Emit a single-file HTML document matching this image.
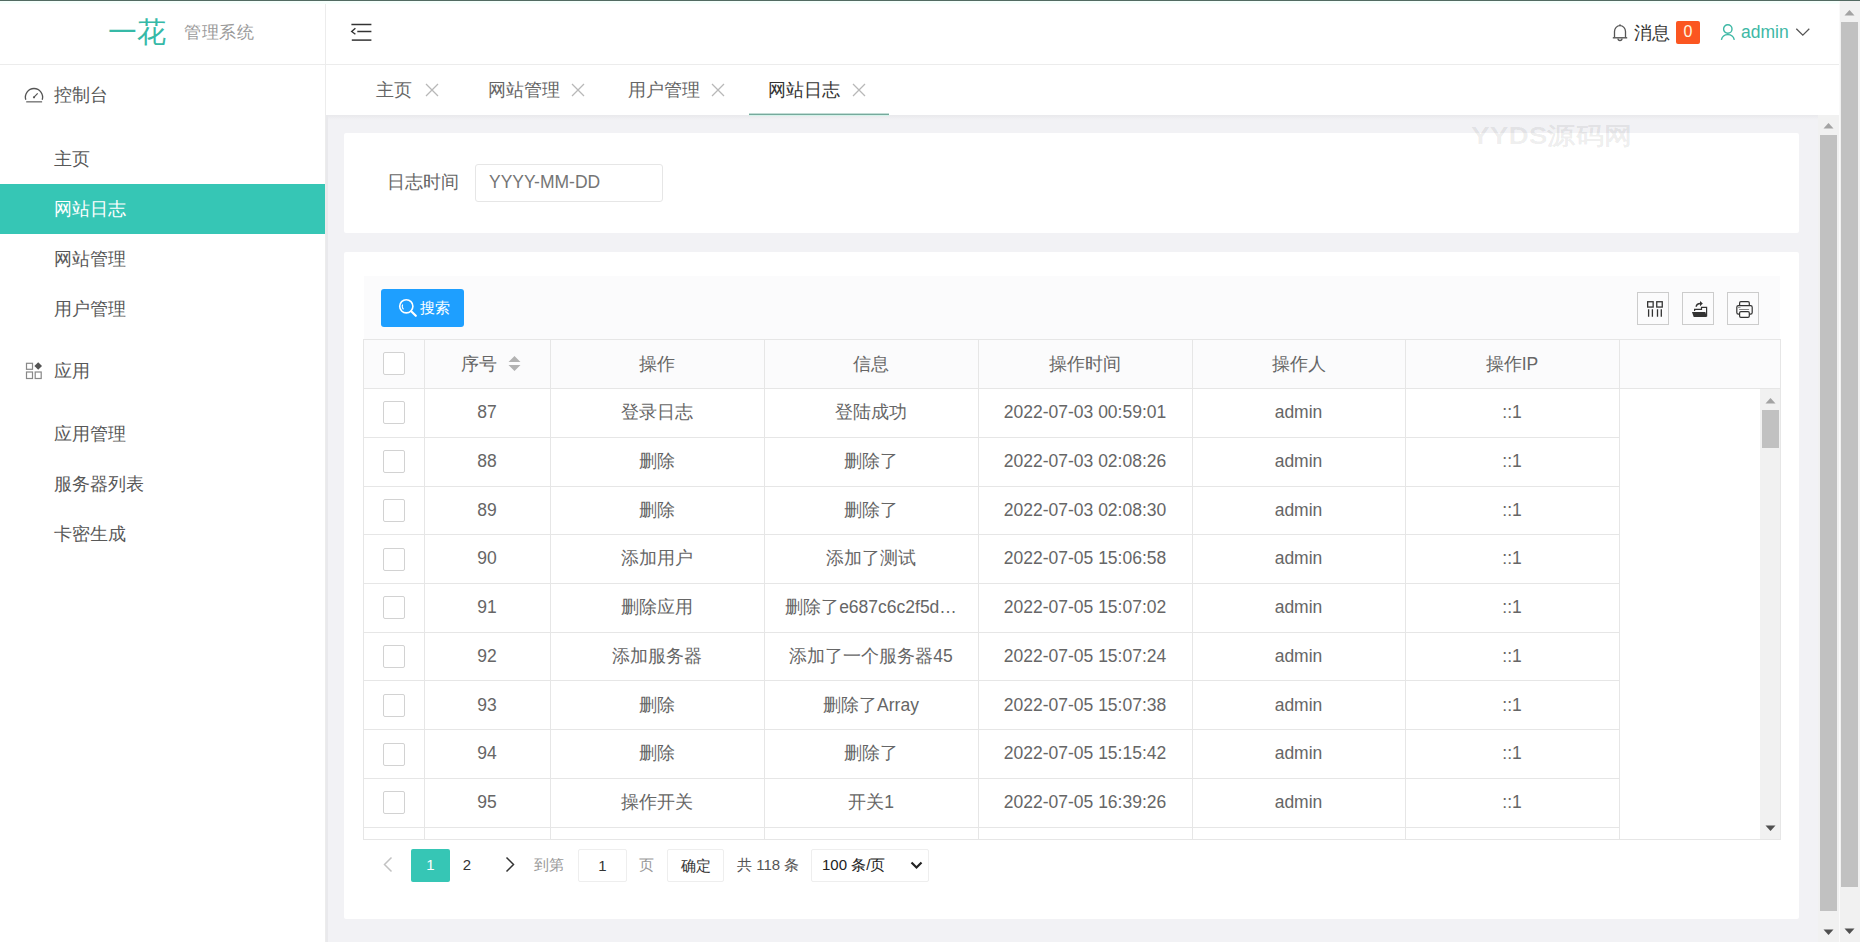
<!DOCTYPE html>
<html><head><meta charset="utf-8">
<style>
*{margin:0;padding:0;box-sizing:border-box}
html,body{width:1860px;height:942px;overflow:hidden;background:#fff;font-family:"Liberation Sans",sans-serif;}
.a{position:absolute;white-space:nowrap}
.t{position:absolute;white-space:nowrap;line-height:20px;font-size:17.5px}
#topline{left:0;top:0;width:1860px;height:1px;background:#536a62}
#side{left:0;top:0;width:326px;height:942px;background:#fff;border-right:1px solid #ececec}
.menu{color:#585858}
#active{left:0;top:184px;width:325px;height:50px;background:#36c6b5}
#content{left:326px;top:115px;width:1492px;height:827px;background:#f2f2f5}
.card{position:absolute;background:#fff;border-radius:2px}
.sb{position:absolute;background:#f1f1f1}
.thumb{position:absolute;background:#c1c1c1}
.hl{position:absolute;height:1px;background:#e6e6e6}
.vl{position:absolute;width:1px;background:#e6e6e6}
.cb{position:absolute;width:22px;height:23px;border:1px solid #d2d2d2;border-radius:2px;background:#fff}
.cell{position:absolute;line-height:20px;font-size:17.5px;color:#666;text-align:center;white-space:nowrap}
</style></head><body>

<!-- SIDEBAR -->
<div class="a" id="side"></div>
<div class="a" style="left:0;top:64px;width:325px;height:1px;background:#ececec"></div>
<div class="t" style="left:108px;top:12px;font-size:29px;line-height:40px;color:#36b9a7">一花</div>
<div class="t" style="left:184px;top:23px;font-size:17px;letter-spacing:0.6px;color:#9a9a9a">管理系统</div>

<svg class="a" style="left:20px;top:82px" width="28" height="26" viewBox="0 0 28 26">
 <path d="M5.8 17.7 A8.6 8.6 0 1 1 22.2 17.7" fill="none" stroke="#555" stroke-width="1.3"/>
 <line x1="6.2" y1="19.8" x2="22.1" y2="19.8" stroke="#808080" stroke-width="1.5"/>
 <line x1="14" y1="15.2" x2="17.7" y2="11.3" stroke="#555" stroke-width="1.2"/>
 <circle cx="14" cy="15.3" r="1.1" fill="#555"/>
</svg>
<div class="t menu" style="left:54px;top:85px">控制台</div>
<div class="t menu" style="left:54px;top:149px">主页</div>
<div class="a" id="active"></div>
<div class="t" style="left:54px;top:199px;color:#fff">网站日志</div>
<div class="t menu" style="left:54px;top:249px">网站管理</div>
<div class="t menu" style="left:54px;top:299px">用户管理</div>
<svg class="a" style="left:25px;top:361px" width="18" height="19" viewBox="0 0 18 19">
 <rect x="1.5" y="2.3" width="6" height="6" fill="none" stroke="#888" stroke-width="1.2"/>
 <rect x="1.5" y="11" width="6" height="6.5" fill="none" stroke="#888" stroke-width="1.2"/>
 <rect x="10.2" y="11" width="6" height="6.5" fill="none" stroke="#888" stroke-width="1.2"/>
 <path d="M13.2 1.2 L17 5 L13.2 8.8 L9.4 5 Z" fill="#555"/>
</svg>
<div class="t menu" style="left:54px;top:361px">应用</div>
<div class="t menu" style="left:54px;top:424px">应用管理</div>
<div class="t menu" style="left:54px;top:474px">服务器列表</div>
<div class="t menu" style="left:54px;top:524px">卡密生成</div>

<!-- HEADER -->
<div class="a" style="left:326px;top:64px;width:1513px;height:1px;background:#ececec"></div>
<svg class="a" style="left:349px;top:21px" width="26" height="22" viewBox="0 0 26 22">
 <line x1="2.4" y1="3.5" x2="22.4" y2="3.5" stroke="#333" stroke-width="1.5"/>
 <line x1="8.3" y1="10.5" x2="22.4" y2="10.5" stroke="#333" stroke-width="1.5"/>
 <line x1="2.8" y1="19.1" x2="22.4" y2="19.1" stroke="#333" stroke-width="1.5"/>
 <polyline points="6.4,7.2 2.7,10.5 6.4,13.3" fill="none" stroke="#333" stroke-width="1.4"/>
</svg>

<svg class="a" style="left:1611px;top:23px" width="18" height="19" viewBox="0 0 18 19">
 <path d="M3.5 14.5 V8.5 A5.5 5.8 0 0 1 14.5 8.5 V14.5" fill="none" stroke="#555" stroke-width="1.3"/>
 <line x1="1.8" y1="14.8" x2="16.2" y2="14.8" stroke="#555" stroke-width="1.4"/>
 <path d="M7 15.5 A2 2 0 0 0 11 15.5" fill="none" stroke="#555" stroke-width="1.3"/>
 <line x1="9" y1="1.2" x2="9" y2="2.8" stroke="#555" stroke-width="1.2"/>
</svg>
<div class="t" style="left:1634px;top:23px;color:#333">消息</div>
<div class="a" style="left:1676px;top:21px;width:24px;height:23px;background:#fb5621;border-radius:2px;color:#fff8e0;font-size:16px;line-height:22px;text-align:center">0</div>
<svg class="a" style="left:1719px;top:23px" width="18" height="18" viewBox="0 0 18 18">
 <circle cx="8.8" cy="6" r="4.2" fill="none" stroke="#3db8a5" stroke-width="1.4"/>
 <path d="M2.4 16.8 A6.6 6.6 0 0 1 15.3 16.8" fill="none" stroke="#3db8a5" stroke-width="1.4"/>
</svg>
<div class="t" style="left:1741px;top:22px;color:#3db8a5">admin</div>
<svg class="a" style="left:1795px;top:27px" width="16" height="10" viewBox="0 0 16 10">
 <polyline points="1.3,1.8 7.8,8.2 14.3,1.8" fill="none" stroke="#555" stroke-width="1.3"/>
</svg>

<!-- TABS -->
<div class="t" style="left:376px;top:80px;color:#666">主页</div>
<div class="t" style="left:488px;top:80px;color:#666">网站管理</div>
<div class="t" style="left:628px;top:80px;color:#666">用户管理</div>
<div class="t" style="left:768px;top:80px;color:#333">网站日志</div>
<svg class="a" style="left:425px;top:83px" width="15" height="14"><path d="M1 1 L13 13 M13 1 L1 13" stroke="#b8b8b8" stroke-width="1.3"/></svg>
<svg class="a" style="left:571px;top:83px" width="15" height="14"><path d="M1 1 L13 13 M13 1 L1 13" stroke="#b8b8b8" stroke-width="1.3"/></svg>
<svg class="a" style="left:711px;top:83px" width="15" height="14"><path d="M1 1 L13 13 M13 1 L1 13" stroke="#b8b8b8" stroke-width="1.3"/></svg>
<svg class="a" style="left:852px;top:83px" width="15" height="14"><path d="M1 1 L13 13 M13 1 L1 13" stroke="#b8b8b8" stroke-width="1.3"/></svg>


<!-- CONTENT -->
<div class="a" id="content"></div>
<div class="a" style="left:326px;top:115px;width:1492px;height:5px;background:linear-gradient(#e9e9ec,#f2f2f5)"></div>
<div class="a" style="left:326px;top:115px;width:2px;height:827px;background:#e9e9ec"></div>

<div class="a" style="left:749px;top:113px;width:140px;height:1px;background:#c2dcd5"></div><div class="a" style="left:749px;top:114px;width:140px;height:1px;background:#76a99c"></div>
<div class="a" style="left:749px;top:115px;width:140px;height:1px;background:#d4f3ea"></div>
<div class="card" style="left:344px;top:133px;width:1455px;height:100px"></div>
<div class="t" style="left:387px;top:172px;color:#666">日志时间</div>
<div class="a" style="left:475px;top:164px;width:188px;height:38px;border:1px solid #e6e6e6;border-radius:3px;background:#fff"></div>
<div class="t" style="left:489px;top:172px;color:#757575">YYYY-MM-DD</div>

<div class="a" style="left:1471px;top:122px;font-size:24px;line-height:28px;font-weight:bold;color:rgba(0,0,0,0.075);transform:scaleX(1.17);transform-origin:0 0">YYDS源码网</div>

<div class="card" style="left:344px;top:252px;width:1455px;height:667px"></div>
<div class="a" style="left:364px;top:276px;width:1416px;height:63px;background:#fbfbfc"></div>
<div class="a" style="left:381px;top:289px;width:83px;height:38px;background:#1e9fff;border-radius:3px"></div>
<svg class="a" style="left:398px;top:298px" width="20" height="20" viewBox="0 0 20 20">
 <circle cx="8.3" cy="8.3" r="6.6" fill="none" stroke="#fff" stroke-width="1.6"/>
 <path d="M4.6 6.5 A4.5 4.5 0 0 0 5.5 11.3" fill="none" stroke="#fff" stroke-width="1.1"/>
 <line x1="13.2" y1="13.2" x2="17.8" y2="17.8" stroke="#fff" stroke-width="2.2" stroke-linecap="round"/>
</svg>
<div class="a" style="left:420px;top:298px;font-size:15px;line-height:20px;color:#fff">搜索</div>

<div class="a" style="left:1637px;top:292px;width:32px;height:33px;border:1px solid #ccc"></div>
<div class="a" style="left:1682px;top:292px;width:32px;height:33px;border:1px solid #ccc"></div>
<div class="a" style="left:1727px;top:292px;width:32px;height:33px;border:1px solid #ccc"></div>
<svg class="a" style="left:1640px;top:296px" width="26" height="26" viewBox="0 0 26 26">
 <rect x="7.65" y="5.75" width="5.5" height="5.3" fill="none" stroke="#333" stroke-width="1.3"/>
 <rect x="16.75" y="5.75" width="5.5" height="5.3" fill="none" stroke="#333" stroke-width="1.3"/>
 <path d="M8.6 13.2V20.8 M12.4 13.2V20.8 M17.5 13.2V20.8 M21.3 13.2V20.8" stroke="#333" stroke-width="1.3"/>
</svg>
<svg class="a" style="left:1686px;top:296px" width="26" height="26" viewBox="0 0 26 26">
 <path d="M10.2 10.8 C10.4 8.3 12.2 7.4 14.6 7.4" fill="none" stroke="#333" stroke-width="1.5"/>
 <path d="M14 4.9 L16.8 7.6 L14 10.3 Z" fill="#333"/>
 <path d="M8.6 15 V13.4 H15.5 V11.3 H20.6 V20.5" fill="none" stroke="#333" stroke-width="1.2"/>
 <path d="M6 15.9 H19.4 L20.7 21 H7.7 Z" fill="#333"/>
</svg>
<svg class="a" style="left:1730px;top:296px" width="26" height="26" viewBox="0 0 26 26">
 <path d="M9.6 9.3 V6.9 Q9.6 5.6 10.9 5.6 H18 Q19.3 5.6 19.3 6.9 V9.3" fill="none" stroke="#333" stroke-width="1.2"/>
 <rect x="6.8" y="9.6" width="15.4" height="8.6" rx="1.6" fill="none" stroke="#333" stroke-width="1.2"/>
 <rect x="9.6" y="15.6" width="9.7" height="5.8" rx="1.3" fill="#fff" stroke="#333" stroke-width="1.2"/>
 <line x1="9.1" y1="13.5" x2="19.1" y2="13.5" stroke="#777" stroke-width="0.9"/>
 <line x1="8" y1="11.4" x2="10.5" y2="11.4" stroke="#777" stroke-width="0.8"/>
</svg>

<div class="a" style="left:363px;top:339px;width:1417px;height:49px;background:#fbfbfc"></div>
<div class="a" style="left:363px;top:388px;width:1417px;height:451px;background:#fff"></div>
<div class="a" style="left:363px;top:339px;width:1418px;height:501px;border:1px solid #e6e6e6"></div>
<div class="hl" style="left:363px;top:388px;width:1417px"></div>
<div class="hl" style="left:363px;top:437px;width:1256px"></div>
<div class="hl" style="left:363px;top:486px;width:1256px"></div>
<div class="hl" style="left:363px;top:534px;width:1256px"></div>
<div class="hl" style="left:363px;top:583px;width:1256px"></div>
<div class="hl" style="left:363px;top:632px;width:1256px"></div>
<div class="hl" style="left:363px;top:680px;width:1256px"></div>
<div class="hl" style="left:363px;top:729px;width:1256px"></div>
<div class="hl" style="left:363px;top:778px;width:1256px"></div>
<div class="hl" style="left:363px;top:827px;width:1256px"></div>
<div class="vl" style="left:424px;top:339px;height:500px"></div>
<div class="vl" style="left:550px;top:339px;height:500px"></div>
<div class="vl" style="left:764px;top:339px;height:500px"></div>
<div class="vl" style="left:978px;top:339px;height:500px"></div>
<div class="vl" style="left:1192px;top:339px;height:500px"></div>
<div class="vl" style="left:1405px;top:339px;height:500px"></div>
<div class="vl" style="left:1619px;top:339px;height:500px"></div>
<div class="cb" style="left:383px;top:352px"></div>
<div class="cell" style="left:424px;top:354px;width:126px;padding-right:16px">序号</div>
<svg class="a" style="left:507px;top:355px" width="15" height="17" viewBox="0 0 15 17"><path d="M1.5 7 L7.5 1 L13.5 7Z M1.5 10 L7.5 16 L13.5 10Z" fill="#b2b2b2"/></svg>
<div class="cell" style="left:550px;top:354px;width:214px">操作</div>
<div class="cell" style="left:764px;top:354px;width:214px">信息</div>
<div class="cell" style="left:978px;top:354px;width:214px">操作时间</div>
<div class="cell" style="left:1192px;top:354px;width:213px">操作人</div>
<div class="cell" style="left:1405px;top:354px;width:214px">操作IP</div>
<div class="cb" style="left:383px;top:401.40px"></div>
<div class="cell" style="left:424px;top:402.00px;width:126px">87</div>
<div class="cell" style="left:550px;top:402.00px;width:214px">登录日志</div>
<div class="cell" style="left:764px;top:402.00px;width:214px">登陆成功</div>
<div class="cell" style="left:978px;top:402.00px;width:214px">2022-07-03 00:59:01</div>
<div class="cell" style="left:1192px;top:402.00px;width:213px">admin</div>
<div class="cell" style="left:1405px;top:402.00px;width:214px">::1</div>
<div class="cb" style="left:383px;top:450.15px"></div>
<div class="cell" style="left:424px;top:450.75px;width:126px">88</div>
<div class="cell" style="left:550px;top:450.75px;width:214px">删除</div>
<div class="cell" style="left:764px;top:450.75px;width:214px">删除了</div>
<div class="cell" style="left:978px;top:450.75px;width:214px">2022-07-03 02:08:26</div>
<div class="cell" style="left:1192px;top:450.75px;width:213px">admin</div>
<div class="cell" style="left:1405px;top:450.75px;width:214px">::1</div>
<div class="cb" style="left:383px;top:498.90px"></div>
<div class="cell" style="left:424px;top:499.50px;width:126px">89</div>
<div class="cell" style="left:550px;top:499.50px;width:214px">删除</div>
<div class="cell" style="left:764px;top:499.50px;width:214px">删除了</div>
<div class="cell" style="left:978px;top:499.50px;width:214px">2022-07-03 02:08:30</div>
<div class="cell" style="left:1192px;top:499.50px;width:213px">admin</div>
<div class="cell" style="left:1405px;top:499.50px;width:214px">::1</div>
<div class="cb" style="left:383px;top:547.65px"></div>
<div class="cell" style="left:424px;top:548.25px;width:126px">90</div>
<div class="cell" style="left:550px;top:548.25px;width:214px">添加用户</div>
<div class="cell" style="left:764px;top:548.25px;width:214px">添加了测试</div>
<div class="cell" style="left:978px;top:548.25px;width:214px">2022-07-05 15:06:58</div>
<div class="cell" style="left:1192px;top:548.25px;width:213px">admin</div>
<div class="cell" style="left:1405px;top:548.25px;width:214px">::1</div>
<div class="cb" style="left:383px;top:596.40px"></div>
<div class="cell" style="left:424px;top:597.00px;width:126px">91</div>
<div class="cell" style="left:550px;top:597.00px;width:214px">删除应用</div>
<div class="cell" style="left:764px;top:597.00px;width:214px">删除了e687c6c2f5d…</div>
<div class="cell" style="left:978px;top:597.00px;width:214px">2022-07-05 15:07:02</div>
<div class="cell" style="left:1192px;top:597.00px;width:213px">admin</div>
<div class="cell" style="left:1405px;top:597.00px;width:214px">::1</div>
<div class="cb" style="left:383px;top:645.15px"></div>
<div class="cell" style="left:424px;top:645.75px;width:126px">92</div>
<div class="cell" style="left:550px;top:645.75px;width:214px">添加服务器</div>
<div class="cell" style="left:764px;top:645.75px;width:214px">添加了一个服务器45</div>
<div class="cell" style="left:978px;top:645.75px;width:214px">2022-07-05 15:07:24</div>
<div class="cell" style="left:1192px;top:645.75px;width:213px">admin</div>
<div class="cell" style="left:1405px;top:645.75px;width:214px">::1</div>
<div class="cb" style="left:383px;top:693.90px"></div>
<div class="cell" style="left:424px;top:694.50px;width:126px">93</div>
<div class="cell" style="left:550px;top:694.50px;width:214px">删除</div>
<div class="cell" style="left:764px;top:694.50px;width:214px">删除了Array</div>
<div class="cell" style="left:978px;top:694.50px;width:214px">2022-07-05 15:07:38</div>
<div class="cell" style="left:1192px;top:694.50px;width:213px">admin</div>
<div class="cell" style="left:1405px;top:694.50px;width:214px">::1</div>
<div class="cb" style="left:383px;top:742.65px"></div>
<div class="cell" style="left:424px;top:743.25px;width:126px">94</div>
<div class="cell" style="left:550px;top:743.25px;width:214px">删除</div>
<div class="cell" style="left:764px;top:743.25px;width:214px">删除了</div>
<div class="cell" style="left:978px;top:743.25px;width:214px">2022-07-05 15:15:42</div>
<div class="cell" style="left:1192px;top:743.25px;width:213px">admin</div>
<div class="cell" style="left:1405px;top:743.25px;width:214px">::1</div>
<div class="cb" style="left:383px;top:791.40px"></div>
<div class="cell" style="left:424px;top:792.00px;width:126px">95</div>
<div class="cell" style="left:550px;top:792.00px;width:214px">操作开关</div>
<div class="cell" style="left:764px;top:792.00px;width:214px">开关1</div>
<div class="cell" style="left:978px;top:792.00px;width:214px">2022-07-05 16:39:26</div>
<div class="cell" style="left:1192px;top:792.00px;width:213px">admin</div>
<div class="cell" style="left:1405px;top:792.00px;width:214px">::1</div>
<div class="sb" style="left:1760px;top:389px;width:20px;height:450px"></div>
<div class="thumb" style="left:1762px;top:410px;width:17px;height:38px"></div>
<svg class="a" style="left:1765px;top:397px" width="11" height="7"><path d="M0.5 6.5 L5.5 1 L10.5 6.5Z" fill="#a3a3a3"/></svg>
<svg class="a" style="left:1765px;top:825px" width="11" height="7"><path d="M0.5 0.5 L5.5 6 L10.5 0.5Z" fill="#505050"/></svg>

<!-- PAGINATION -->
<svg class="a" style="left:382px;top:856px" width="12" height="17" viewBox="0 0 12 17"><polyline points="9.5,1.5 2.5,8.5 9.5,15.5" fill="none" stroke="#c2c2c2" stroke-width="1.5"/></svg>
<div class="a" style="left:411px;top:849px;width:39px;height:33px;background:#36c6b5;border-radius:2px;color:#fff;font-size:15px;line-height:31px;text-align:center">1</div>
<div class="a" style="left:458px;top:849px;width:18px;height:33px;color:#333;font-size:15px;line-height:31px;text-align:center">2</div>
<svg class="a" style="left:504px;top:856px" width="12" height="17" viewBox="0 0 12 17"><polyline points="2.5,1.5 9.5,8.5 2.5,15.5" fill="none" stroke="#333" stroke-width="1.5"/></svg>
<div class="a" style="left:534px;top:855px;font-size:15px;line-height:20px;color:#999">到第</div>
<div class="a" style="left:578px;top:849px;width:49px;height:33px;border:1px solid #eee;border-radius:2px;color:#333;font-size:15px;line-height:31px;text-align:center">1</div>
<div class="a" style="left:639px;top:855px;font-size:15px;line-height:20px;color:#999">页</div>
<div class="a" style="left:667px;top:849px;width:57px;height:33px;border:1px solid #eee;border-radius:2px;color:#333;font-size:15px;line-height:31px;text-align:center">确定</div>
<div class="a" style="left:737px;top:855px;font-size:15px;line-height:20px;color:#555">共 118 条</div>
<div class="a" style="left:811px;top:849px;width:118px;height:33px;border:1px solid #eee;border-radius:2px;"></div>
<div class="a" style="left:822px;top:855px;font-size:15px;line-height:20px;color:#222">100 条/页</div>
<svg class="a" style="left:909px;top:860px" width="15" height="11" viewBox="0 0 15 11"><polyline points="2.5,2.5 7.5,7.5 12.5,2.5" fill="none" stroke="#222" stroke-width="2.2"/></svg>

<!-- SCROLLBARS -->
<div class="sb" style="left:1818px;top:115px;width:21px;height:827px"></div>
<div class="thumb" style="left:1820px;top:135px;width:17px;height:776px"></div>
<svg class="a" style="left:1823px;top:122px" width="11" height="7"><path d="M0.5 6.5 L5.5 1 L10.5 6.5Z" fill="#a3a3a3"/></svg>
<svg class="a" style="left:1823px;top:929px" width="11" height="7"><path d="M0.5 0.5 L5.5 6 L10.5 0.5Z" fill="#505050"/></svg>

<div class="sb" style="left:1839px;top:0;width:21px;height:942px"></div>
<div class="a" style="left:1839px;top:0;width:1px;height:942px;background:#fafafa"></div>
<div class="thumb" style="left:1841px;top:22px;width:17px;height:865px"></div>
<svg class="a" style="left:1844px;top:9px" width="11" height="7"><path d="M0.5 6.5 L5.5 1 L10.5 6.5Z" fill="#a3a3a3"/></svg>
<svg class="a" style="left:1844px;top:928px" width="11" height="7"><path d="M0.5 0.5 L5.5 6 L10.5 0.5Z" fill="#505050"/></svg>

<div class="a" id="topline"></div>
<div class="a" style="left:0;top:1px;width:1839px;height:3px;background:#f6fffc"></div>
</body></html>
